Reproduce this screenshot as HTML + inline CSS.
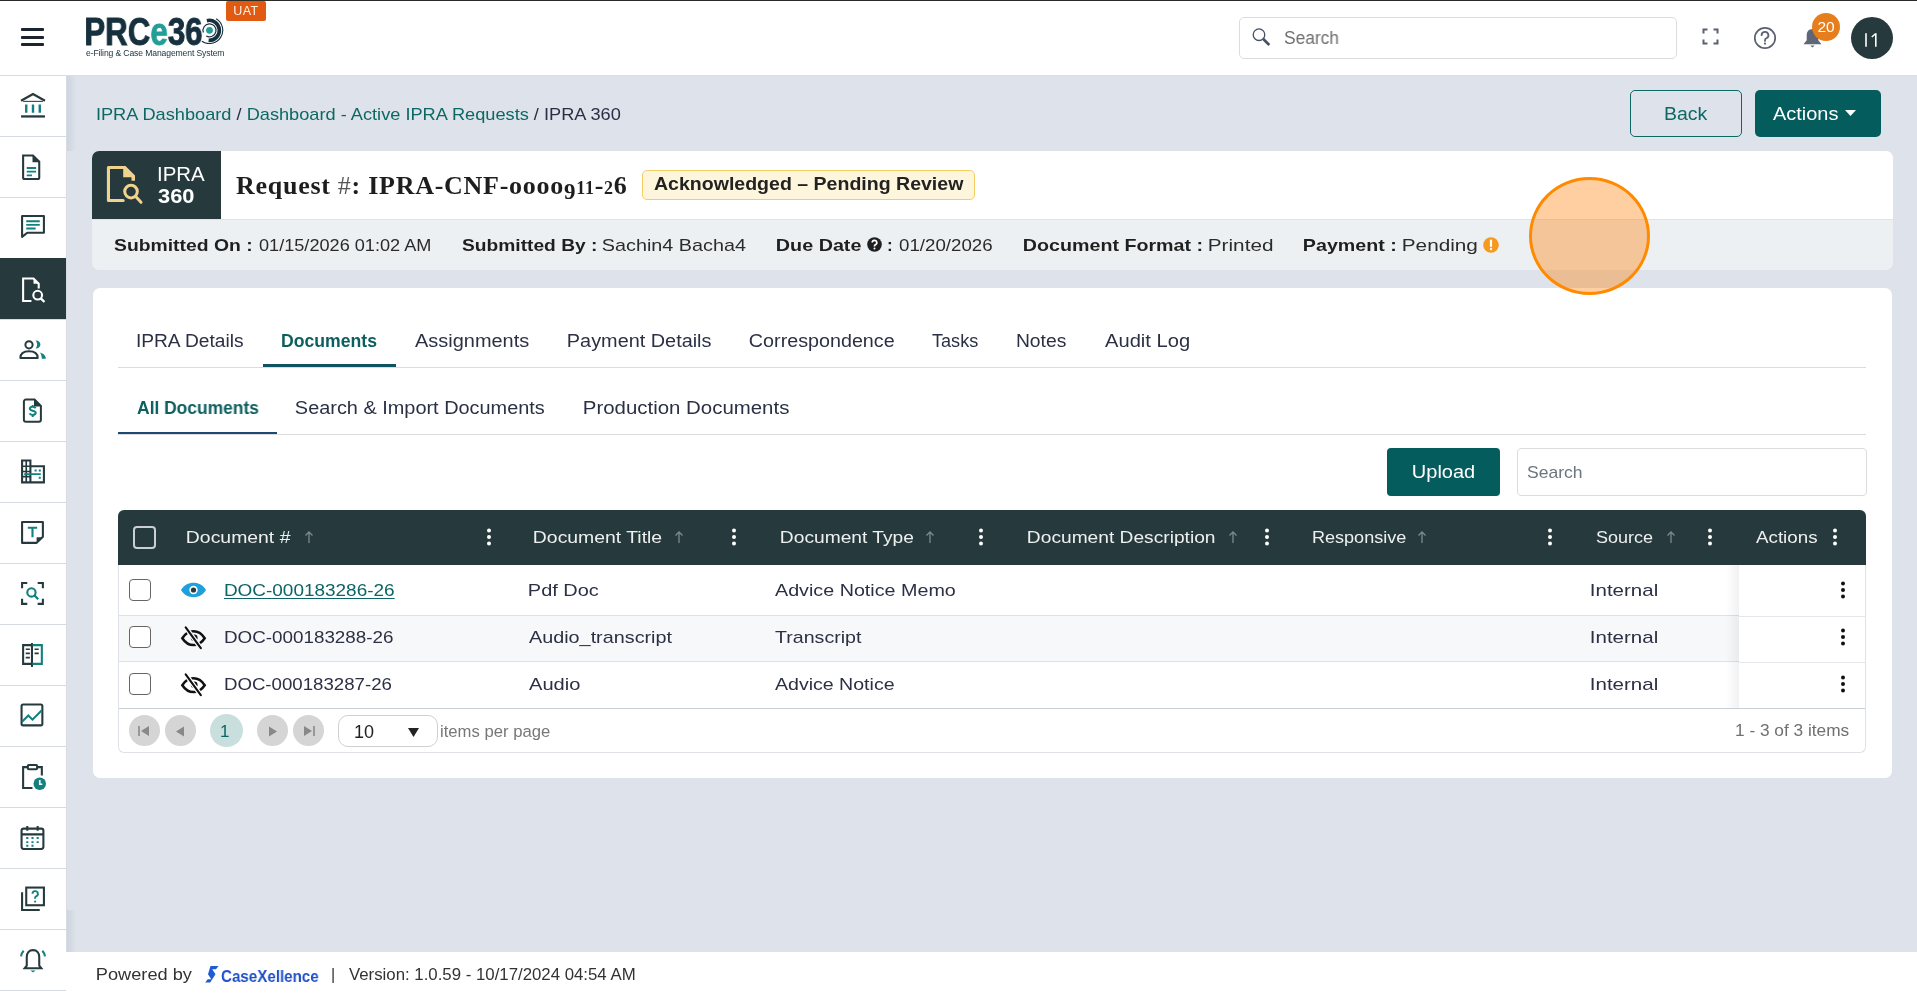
<!DOCTYPE html>
<html><head><meta charset="utf-8">
<style>
*{box-sizing:border-box;margin:0;padding:0}
html,body{width:1917px;height:993px;overflow:hidden;background:#dee2ea;font-family:"Liberation Sans",sans-serif;color:#2b3044}
.a{position:absolute;white-space:nowrap;will-change:transform}
</style></head><body>

<div class="a" style="left:0;top:0;width:1917px;height:75px;background:#fff"></div>
<div class="a" style="left:0;top:0;width:1917px;height:1px;background:#272c26"></div>
<div class="a" style="left:21px;top:28px;width:23px;height:2.6px;background:#1c2430;border-radius:1px"></div>
<div class="a" style="left:21px;top:35.5px;width:23px;height:2.6px;background:#1c2430;border-radius:1px"></div>
<div class="a" style="left:21px;top:43px;width:23px;height:2.6px;background:#1c2430;border-radius:1px"></div>
<div class="a" style="left:84px;top:12.73px;line-height:38px;font-size:38px;font-weight:700;color:#16303d;letter-spacing:0px;-webkit-text-stroke:0.9px currentColor;transform:scaleX(0.8227);transform-origin:2px 0">PRC<span style="color:#239e96">e</span>36</div>
<svg class="a" style="left:195px;top:14.2px" width="30" height="30" viewBox="0 0 30 30">
<path d="M11.9 6.64 A10 10 0 1 1 13.6 26.3" fill="none" stroke="#16303d" stroke-width="3.6"/>
<path d="M8.39 18.52 A6.5 6.5 0 1 1 11.25 21.93" fill="none" stroke="#16303d" stroke-width="1.2"/>
<path d="M21.15 4.78 A13.3 13.3 0 1 1 6.87 27.2" fill="none" stroke="#16303d" stroke-width="1.1"/>
<circle cx="14.5" cy="16.3" r="3.4" fill="#239e96"/>
</svg>
<div class="a" style="left:86px;top:47.5px;font-size:8.6px;line-height:10px;color:#16303d;letter-spacing:-0.12px">e-Filing &amp; Case Management System</div>
<div class="a" style="left:226px;top:1px;width:40px;height:20px;background:#e05a12;border-radius:2px;color:#fdf0e6;font-size:12.5px;text-align:center;line-height:21px;letter-spacing:0.4px">UAT</div>
<div class="a" style="left:1239px;top:17px;width:438px;height:42px;border:1px solid #dcdcdc;border-radius:5px"></div>
<svg class="a" style="left:1250px;top:25px" width="24" height="24" viewBox="0 0 24 24"><circle cx="9" cy="9.7" r="5.8" fill="none" stroke="#454f63" stroke-width="1.3"/><path d="M13.3 14 L19.3 20" stroke="#454f63" stroke-width="2.6"/></svg>
<div class="a" style="left:1283.6px;top:30.19px;line-height:17.5px;font-size:17.5px;font-weight:400;color:#6e6e6e;letter-spacing:0px;;transform:scaleX(0.9889);transform-origin:1px 0">Search</div>
<svg class="a" style="left:1702px;top:28px" width="17" height="17" viewBox="0 0 17 17" fill="none" stroke="#5a6170" stroke-width="2"><path d="M1.5 5.5V1.5H5.5M11.5 1.5H15.5V5.5M15.5 11.5V15.5H11.5M5.5 15.5H1.5V11.5"/></svg>
<svg class="a" style="left:1753px;top:26px" width="24" height="24" viewBox="0 0 24 24"><circle cx="12" cy="12" r="10.2" fill="none" stroke="#5a6170" stroke-width="1.7"/><path d="M8.6 9.2a3.4 3.4 0 1 1 4.8 3.1c-.9.4-1.4 1-1.4 1.9v.7" fill="none" stroke="#5a6170" stroke-width="1.8" stroke-linecap="round"/><circle cx="12" cy="17.6" r="1.1" fill="#5a6170"/></svg>
<svg class="a" style="left:1803px;top:28px" width="19" height="20" viewBox="0 0 19 20"><path d="M9.5 1c-3.6 0-5.8 2.8-5.8 6.3v5L0.5 16.2h18l-3.2-3.9v-5C15.3 3.8 13.1 1 9.5 1z" fill="#5f6675"/><path d="M7.3 17.5h4.4l-2.2 1.9z" fill="#5f6675"/></svg>
<div class="a" style="left:1812px;top:13px;width:28px;height:28px;border-radius:50%;background:#e67e1e;color:#fff;font-size:15.5px;text-align:center;line-height:28px">20</div>
<div class="a" style="left:1851px;top:17px;width:42px;height:42px;border-radius:50%;background:#263a3e"></div>
<svg class="a" style="left:1851px;top:17px" width="42" height="42" viewBox="0 0 42 42"><path d="M15 16.2V29.8M24.8 16.2V29.8M24.8 16.5L20.8 20" fill="none" stroke="#fff" stroke-width="1.6"/></svg>
<div class="a" style="left:0;top:75px;width:66px;height:918px;background:#fff"></div>
<div class="a" style="left:66px;top:75px;width:10px;height:76px;background:linear-gradient(90deg,#cbd3dd,#dee2ea)"></div>
<div class="a" style="left:66px;top:910px;width:10px;height:42px;background:linear-gradient(90deg,#cbd3dd,#dee2ea)"></div>
<div class="a" style="left:66px;top:75px;width:1px;height:918px;background:#d6dbe4"></div>
<div class="a" style="left:0;top:75px;width:66px;height:1px;background:#d6dbe3"></div>
<div class="a" style="left:0;top:136px;width:66px;height:1px;background:#d6dbe3"></div>
<div class="a" style="left:0;top:197px;width:66px;height:1px;background:#d6dbe3"></div>
<div class="a" style="left:0;top:258px;width:66px;height:1px;background:#d6dbe3"></div>
<div class="a" style="left:0;top:319px;width:66px;height:1px;background:#d6dbe3"></div>
<div class="a" style="left:0;top:380px;width:66px;height:1px;background:#d6dbe3"></div>
<div class="a" style="left:0;top:441px;width:66px;height:1px;background:#d6dbe3"></div>
<div class="a" style="left:0;top:502px;width:66px;height:1px;background:#d6dbe3"></div>
<div class="a" style="left:0;top:563px;width:66px;height:1px;background:#d6dbe3"></div>
<div class="a" style="left:0;top:624px;width:66px;height:1px;background:#d6dbe3"></div>
<div class="a" style="left:0;top:685px;width:66px;height:1px;background:#d6dbe3"></div>
<div class="a" style="left:0;top:746px;width:66px;height:1px;background:#d6dbe3"></div>
<div class="a" style="left:0;top:807px;width:66px;height:1px;background:#d6dbe3"></div>
<div class="a" style="left:0;top:868px;width:66px;height:1px;background:#d6dbe3"></div>
<div class="a" style="left:0;top:929px;width:66px;height:1px;background:#d6dbe3"></div>
<div class="a" style="left:0;top:990px;width:66px;height:1px;background:#d6dbe3"></div>
<div class="a" style="left:0;top:258px;width:66px;height:61px;background:#263a3e"></div>
<div class="a" style="left:67px;top:75px;width:1850px;height:1px;background:#dcdde0"></div>
<svg class="a" style="left:20px;top:91.5px" width="26" height="26" viewBox="0 0 25 25"><path d="M1 8.5 L12.5 2 L24 8.5" fill="none" stroke="#263a3e" stroke-width="2.2"/><path d="M3 9h19" stroke="#263a3e" stroke-width="1"/><path d="M6 12v8M12.5 12v8M19 12v8" stroke="#12807e" stroke-width="2.3"/><path d="M1 23.5h23" stroke="#263a3e" stroke-width="2.2"/></svg>
<svg class="a" style="left:20px;top:153.5px" width="26" height="26" viewBox="0 0 25 25"><path d="M3 1.5h9.5l6 6v15a1.5 1.5 0 0 1-1.5 1.5H4.5A1.5 1.5 0 0 1 3 22.5z" fill="none" stroke="#263a3e" stroke-width="2"/><path d="M12 1.5v6.5h6.5" fill="#263a3e"/><path d="M6.5 13.5h9M6.5 17h9M6.5 20.5h5" stroke="#12807e" stroke-width="1.8"/></svg>
<svg class="a" style="left:20px;top:213.5px" width="26" height="26" viewBox="0 0 25 25"><path d="M2 2h21v16H7l-5 4z" fill="none" stroke="#263a3e" stroke-width="2" stroke-linejoin="round"/><path d="M6 7h13M6 10.5h13M6 14h9" stroke="#12807e" stroke-width="1.8"/></svg>
<svg class="a" style="left:20px;top:276.5px" width="26" height="26" viewBox="0 0 25 25"><path d="M11 23H3V1.5h10l5 5V11" fill="none" stroke="#fff" stroke-width="2"/><path d="M13 1.5v5h5z" fill="#fff"/><circle cx="17" cy="17.5" r="4.2" fill="none" stroke="#fff" stroke-width="2"/><path d="M20 20.5l3.5 3.5" stroke="#fff" stroke-width="2.2"/></svg>
<svg class="a" style="left:20px;top:458.5px" width="26" height="26" viewBox="0 0 25 25"><path d="M2 1.5h8v21H2z M10 7h13v15.5H10z" fill="none" stroke="#263a3e" stroke-width="2"/><path d="M2 7h8M2 12h8M2 17h8M6 1.5v21" stroke="#263a3e" stroke-width="1.6"/><path d="M4 14.5h16M14 11h2M18 11h2M18 18h2" stroke="#12807e" stroke-width="1.8"/></svg>
<svg class="a" style="left:20px;top:519.5px" width="26" height="26" viewBox="0 0 25 25"><path d="M2 2h20v14l-6 6H2z" fill="none" stroke="#263a3e" stroke-width="2" stroke-linejoin="round"/><path d="M16 22v-5.5h6z" fill="#263a3e"/><path d="M7.5 7.5h9M12 7.5v9" stroke="#12807e" stroke-width="2"/></svg>
<svg class="a" style="left:20px;top:580.5px" width="26" height="26" viewBox="0 0 25 25"><path d="M2 7V2h5M17 2h5v5M22 17v5h-5M7 22H2v-5" fill="none" stroke="#263a3e" stroke-width="2"/><circle cx="11" cy="11" r="4" fill="none" stroke="#12807e" stroke-width="2"/><path d="M14 14l3.5 3.5" stroke="#12807e" stroke-width="2.2"/></svg>
<svg class="a" style="left:20px;top:641.5px" width="26" height="26" viewBox="0 0 25 25"><path d="M11.5 1v23" stroke="#263a3e" stroke-width="2"/><path d="M11 3H3v18h8" fill="none" stroke="#263a3e" stroke-width="2"/><path d="M12 3h9v18h-9" fill="none" stroke="#12807e" stroke-width="2"/><path d="M5.5 7h4M5.5 11h4M5.5 15h4M14 7h4M14 11h4" stroke="#263a3e" stroke-width="1.6"/></svg>
<svg class="a" style="left:20px;top:702.5px" width="26" height="26" viewBox="0 0 25 25"><rect x="1.5" y="1.5" width="20" height="20" rx="1.5" fill="none" stroke="#263a3e" stroke-width="2"/><path d="M2 18l6-6 4 4 9-9" fill="none" stroke="#12807e" stroke-width="2"/></svg>
<svg class="a" style="left:20px;top:763.5px" width="26" height="26" viewBox="0 0 25 25"><path d="M8 3H3v20h9M16 3h5v8" fill="none" stroke="#263a3e" stroke-width="2"/><rect x="7.5" y="1" width="9" height="4" rx="1" fill="none" stroke="#263a3e" stroke-width="2"/><circle cx="19" cy="19" r="6" fill="#12807e"/><path d="M19 15.5v4h2.5" fill="none" stroke="#fff" stroke-width="1.6"/></svg>
<svg class="a" style="left:20px;top:824.5px" width="26" height="26" viewBox="0 0 25 25"><rect x="1.5" y="3.5" width="21" height="19.5" rx="2" fill="none" stroke="#263a3e" stroke-width="2"/><path d="M1.5 9h21M7 1v4.5M17 1v4.5" stroke="#263a3e" stroke-width="2"/><path d="M6 12.5h2M11 12.5h2M16 12.5h2M6 16.5h2M11 16.5h2M16 16.5h2M6 20h2M11 20h2" stroke="#12807e" stroke-width="1.8"/></svg>
<svg class="a" style="left:20px;top:885.5px" width="26" height="26" viewBox="0 0 25 25"><rect x="6" y="1.5" width="17" height="17" fill="none" stroke="#263a3e" stroke-width="2"/><path d="M2 6v17h17" fill="none" stroke="#263a3e" stroke-width="2"/><path d="M12 7.5a2.6 2.6 0 1 1 3.5 2.5c-.7.3-1 .8-1 1.5v.8" fill="none" stroke="#12807e" stroke-width="1.8"/><circle cx="14.5" cy="15" r="1" fill="#12807e"/></svg>
<svg class="a" style="left:20px;top:946.5px" width="26" height="26" viewBox="0 0 25 25"><path d="M12.5 3c-4 0-6 3-6 6.5V18l-2 2.5h16l-2-2.5V9.5C18.5 6 16.5 3 12.5 3z" fill="none" stroke="#263a3e" stroke-width="2"/><path d="M3.5 3.5C2 5 1.2 7 1 9M21.5 3.5C23 5 23.8 7 24 9" fill="none" stroke="#12807e" stroke-width="2"/><path d="M10 22.5h5l-2.5 2z" fill="#12807e"/></svg>
<svg class="a" style="left:18px;top:337px" width="30" height="26" viewBox="0 0 30 26"><circle cx="11" cy="7.8" r="3.6" fill="none" stroke="#263a3e" stroke-width="2"/><path d="M2.4 21C2.4 16.5 6 14.3 11 14.3S19.7 16.5 19.7 21Z" fill="none" stroke="#263a3e" stroke-width="2" stroke-linejoin="round"/><path d="M17.6 3.4C20.8 3.4 22.4 5.5 22.4 7.5S20.8 11.6 17.6 11.6C18.7 10 19.1 9 19.1 7.5S18.7 5 17.6 3.4Z" fill="#12807e"/><path d="M21.8 15.6C25.5 16.5 27.8 18.8 27.8 21.7H23.8C23.8 19.5 23.2 17.2 21.8 15.6Z" fill="#12807e"/></svg>
<svg class="a" style="left:20px;top:396px" width="26" height="30" viewBox="0 0 26 30"><path d="M14.5 3.5H5.9a2 2 0 0 0-2 2V23.7a2 2 0 0 0 2 2H18.9a2 2 0 0 0 2-2V9.9Z" fill="none" stroke="#263a3e" stroke-width="2" stroke-linejoin="round"/><path d="M14 2.6L21.8 10.4H14Z" fill="#263a3e"/><path d="M15.6 12.2c-.5-1-1.5-1.4-2.9-1.4-1.5 0-2.8.8-2.8 2s1.2 1.6 2.8 1.9 3 .7 3 2.1-1.3 2.1-3 2.1c-1.5 0-2.6-.5-3.1-1.5M12.7 9v2M12.7 19v2" fill="none" stroke="#12807e" stroke-width="2"/></svg>
<div class="a" style="left:96px;top:105.61px;line-height:17px;font-size:17px;font-weight:400;color:#2a2f45;letter-spacing:0px;;transform:scaleX(1.0703);transform-origin:1px 0"><span style="color:#0d6864">IPRA Dashboard</span> / <span style="color:#0d6864">Dashboard - Active IPRA Requests</span> / IPRA 360</div>
<div class="a" style="left:1630px;top:90px;width:112px;height:47px;border:1px solid #0d6864;border-radius:5px"></div>
<div class="a" style="left:1664.3px;top:105.79px;line-height:17.5px;font-size:17.5px;font-weight:400;color:#0d6864;letter-spacing:0px;;transform:scaleX(1.1132);transform-origin:1px 0">Back</div>
<div class="a" style="left:1755px;top:90px;width:126px;height:47px;background:#055c5c;border-radius:5px"></div>
<div class="a" style="left:1772.6px;top:105.79px;line-height:17.5px;font-size:17.5px;font-weight:400;color:#fff;letter-spacing:0px;;transform:scaleX(1.1404);transform-origin:0px 0">Actions</div>
<svg class="a" style="left:1845px;top:110px" width="11" height="6" viewBox="0 0 11 6"><path d="M0 0h11L5.5 6z" fill="#fff"/></svg>
<div class="a" style="left:92px;top:151px;width:1801px;height:119px;background:#edf0f2;border-radius:7px;overflow:hidden"><div class="a" style="left:0;top:0;width:1801px;height:69px;background:#fff;border-bottom:1px solid #dfe3e6"></div><div class="a" style="left:0;top:0;width:129px;height:68px;background:#263a3e"></div></div>
<svg class="a" style="left:95px;top:155px" width="50" height="52" viewBox="0 0 50 52"><path d="M28.2 45.5H13.45V12.5H29" fill="none" stroke="#f1d38e" stroke-width="3.1" stroke-linejoin="round" stroke-linecap="round"/><path d="M28.2 11H30.5L40 20.5V25.7H36.5V22.2H28.2Z" fill="#f1d38e"/><circle cx="36" cy="36.6" r="6.3" fill="none" stroke="#f1d38e" stroke-width="3"/><path d="M41 41.8L46 47.3" stroke="#f1d38e" stroke-width="3" stroke-linecap="round"/></svg>
<div class="a" style="left:157px;top:164.69px;line-height:19.5px;font-size:19.5px;font-weight:400;color:#fff;letter-spacing:0px;font-weight:300;transform:scaleX(1.0489);transform-origin:1px 0">IPRA</div>
<div class="a" style="left:158px;top:186.69px;line-height:19.5px;font-size:19.5px;font-weight:700;color:#fff;letter-spacing:0px;;transform:scaleX(1.1188);transform-origin:0px 0">360</div>
<div class="a" style="left:236px;top:172.72px;line-height:26px;font-size:26px;font-weight:700;color:#1e1e1e;letter-spacing:0.724px;font-family:'Liberation Serif',serif;">Request <span style="font-weight:400;color:#555">#</span>: IPRA-CNF-oooo<span style="font-size:23px;position:relative;top:5px">9</span><span style="font-size:18px">11</span>-<span style="font-size:18px">2</span>6</div>
<div class="a" style="left:642px;top:170px;width:333px;height:30px;background:#fdf6dc;border:1px solid #f3cf63;border-radius:5px"></div>
<div class="a" style="left:653.7px;top:176.39px;line-height:17.5px;font-size:17.5px;font-weight:700;color:#222;letter-spacing:0px;;transform:scaleX(1.1162);transform-origin:0px 0">Acknowledged &#8211; Pending Review</div>
<div class="a" style="left:114.2px;top:236.61px;line-height:17px;font-size:17px;font-weight:700;color:#1f1f1f;letter-spacing:0px;;transform:scaleX(1.1380);transform-origin:0px 0">Submitted On :</div>
<div class="a" style="left:259px;top:236.61px;line-height:17px;font-size:17px;font-weight:400;color:#2b2b2b;letter-spacing:0px;;transform:scaleX(1.0665);transform-origin:0px 0">01/15/2026 01:02 AM</div>
<div class="a" style="left:461.7px;top:236.61px;line-height:17px;font-size:17px;font-weight:700;color:#1f1f1f;letter-spacing:0px;;transform:scaleX(1.1286);transform-origin:0px 0">Submitted By :</div>
<div class="a" style="left:602.4px;top:236.61px;line-height:17px;font-size:17px;font-weight:400;color:#2b2b2b;letter-spacing:0px;;transform:scaleX(1.1634);transform-origin:1px 0">Sachin4 Bacha4</div>
<div class="a" style="left:776.2px;top:236.61px;line-height:17px;font-size:17px;font-weight:700;color:#1f1f1f;letter-spacing:0px;;transform:scaleX(1.1616);transform-origin:1px 0">Due Date</div>
<svg class="a" style="left:867px;top:237px" width="15" height="15" viewBox="0 0 15 15"><circle cx="7.5" cy="7.5" r="7.3" fill="#1f1f1f"/><path d="M5.2 5.6a2.3 2.3 0 1 1 3.2 2.1c-.6.3-.9.7-.9 1.3v.4" fill="none" stroke="#fff" stroke-width="1.7"/><circle cx="7.5" cy="11.6" r="1" fill="#fff"/></svg>
<div class="a" style="left:886.5px;top:236.61px;line-height:17px;font-size:17px;font-weight:700;color:#1f1f1f;letter-spacing:0px;">:</div>
<div class="a" style="left:899px;top:236.61px;line-height:17px;font-size:17px;font-weight:400;color:#2b2b2b;letter-spacing:0px;;transform:scaleX(1.1000);transform-origin:0px 0">01/20/2026</div>
<div class="a" style="left:1022.6px;top:236.61px;line-height:17px;font-size:17px;font-weight:700;color:#1f1f1f;letter-spacing:0px;;transform:scaleX(1.1565);transform-origin:1px 0">Document Format :</div>
<div class="a" style="left:1207.7px;top:236.61px;line-height:17px;font-size:17px;font-weight:400;color:#2b2b2b;letter-spacing:0px;;transform:scaleX(1.2192);transform-origin:1px 0">Printed</div>
<div class="a" style="left:1303.2px;top:236.61px;line-height:17px;font-size:17px;font-weight:700;color:#1f1f1f;letter-spacing:0px;;transform:scaleX(1.1557);transform-origin:1px 0">Payment :</div>
<div class="a" style="left:1401.5px;top:236.61px;line-height:17px;font-size:17px;font-weight:400;color:#2b2b2b;letter-spacing:0px;;transform:scaleX(1.2197);transform-origin:1px 0">Pending</div>
<svg class="a" style="left:1483px;top:237px" width="16" height="16" viewBox="0 0 16 16"><circle cx="8" cy="8" r="7.8" fill="#f59a1f"/><path d="M8 3.5v5.5" stroke="#fff" stroke-width="2.2" stroke-linecap="round"/><circle cx="8" cy="12" r="1.2" fill="#fff"/></svg>
<div class="a" style="left:93px;top:288px;width:1799px;height:490px;background:#fff;border-radius:7px"></div>
<div class="a" style="left:136.3px;top:333.19px;line-height:17.5px;font-size:17.5px;font-weight:400;color:#2b3044;letter-spacing:0px;;transform:scaleX(1.0959);transform-origin:1px 0">IPRA Details</div>
<div class="a" style="left:281px;top:333.19px;line-height:17.5px;font-size:17.5px;font-weight:700;color:#0d5e5e;letter-spacing:0px;;transform:scaleX(1.0074);transform-origin:1px 0">Documents</div>
<div class="a" style="left:415.1px;top:333.19px;line-height:17.5px;font-size:17.5px;font-weight:400;color:#2b3044;letter-spacing:0px;;transform:scaleX(1.1400);transform-origin:0px 0">Assignments</div>
<div class="a" style="left:567.2px;top:333.19px;line-height:17.5px;font-size:17.5px;font-weight:400;color:#2b3044;letter-spacing:0px;;transform:scaleX(1.1349);transform-origin:1px 0">Payment Details</div>
<div class="a" style="left:748.5px;top:333.19px;line-height:17.5px;font-size:17.5px;font-weight:400;color:#2b3044;letter-spacing:0px;;transform:scaleX(1.1266);transform-origin:1px 0">Correspondence</div>
<div class="a" style="left:932px;top:333.19px;line-height:17.5px;font-size:17.5px;font-weight:400;color:#2b3044;letter-spacing:0px;;transform:scaleX(1.0333);transform-origin:0px 0">Tasks</div>
<div class="a" style="left:1016.4px;top:333.19px;line-height:17.5px;font-size:17.5px;font-weight:400;color:#2b3044;letter-spacing:0px;;transform:scaleX(1.1022);transform-origin:1px 0">Notes</div>
<div class="a" style="left:1105.4px;top:333.19px;line-height:17.5px;font-size:17.5px;font-weight:400;color:#2b3044;letter-spacing:0px;;transform:scaleX(1.1507);transform-origin:0px 0">Audit Log</div>
<div class="a" style="left:118px;top:367px;width:1748px;height:1px;background:#dcdcdc"></div>
<div class="a" style="left:263px;top:364px;width:133px;height:3px;background:#0f5262"></div>
<div class="a" style="left:136.5px;top:400.19px;line-height:17.5px;font-size:17.5px;font-weight:700;color:#0d5e5e;letter-spacing:0px;;transform:scaleX(0.9951);transform-origin:0px 0">All Documents</div>
<div class="a" style="left:295.3px;top:400.19px;line-height:17.5px;font-size:17.5px;font-weight:400;color:#2b3044;letter-spacing:0px;;transform:scaleX(1.1370);transform-origin:1px 0">Search &amp; Import Documents</div>
<div class="a" style="left:582.8px;top:400.19px;line-height:17.5px;font-size:17.5px;font-weight:400;color:#2b3044;letter-spacing:0px;;transform:scaleX(1.1665);transform-origin:1px 0">Production Documents</div>
<div class="a" style="left:118px;top:434px;width:1748px;height:1px;background:#dcdcdc"></div>
<div class="a" style="left:118px;top:432px;width:159px;height:2px;background:#1b4a72"></div>
<div class="a" style="left:1387px;top:448px;width:113px;height:48px;background:#055c5c;border-radius:4px"></div>
<div class="a" style="left:1411.6px;top:463.79px;line-height:17.5px;font-size:17.5px;font-weight:400;color:#fff;letter-spacing:0px;;transform:scaleX(1.1426);transform-origin:1px 0">Upload</div>
<div class="a" style="left:1517px;top:448px;width:350px;height:48px;border:1px solid #dcdcdc;border-radius:4px"></div>
<div class="a" style="left:1527.3px;top:463.91px;line-height:17px;font-size:17px;font-weight:400;color:#6c757d;letter-spacing:0px;;transform:scaleX(1.0327);transform-origin:1px 0">Search</div>
<div class="a" style="left:118px;top:510px;width:1748px;height:55px;background:#263a3e;border-radius:6px 6px 0 0"></div>
<div class="a" style="left:133px;top:526px;width:23px;height:23px;border:2px solid #c9cfd2;border-radius:4px"></div>
<div class="a" style="left:185.9px;top:528.81px;line-height:17px;font-size:17px;font-weight:400;color:#eef0f0;letter-spacing:0px;;transform:scaleX(1.1407);transform-origin:1px 0">Document #</div>
<svg class="a" style="left:303.5px;top:530px" width="10" height="14" viewBox="0 0 10 14"><path d="M5 13V2M1.5 5.5L5 2l3.5 3.5" fill="none" stroke="#7d8a8d" stroke-width="1.3"/></svg>
<svg class="a" style="left:485.6px;top:528px" width="6" height="18" viewBox="0 0 6 18"><circle cx="3" cy="2.5" r="2" fill="#fff"/><circle cx="3" cy="9" r="2" fill="#fff"/><circle cx="3" cy="15.5" r="2" fill="#fff"/></svg>
<div class="a" style="left:533.1px;top:528.81px;line-height:17px;font-size:17px;font-weight:400;color:#eef0f0;letter-spacing:0px;;transform:scaleX(1.1402);transform-origin:1px 0">Document Title</div>
<svg class="a" style="left:674.4px;top:530px" width="10" height="14" viewBox="0 0 10 14"><path d="M5 13V2M1.5 5.5L5 2l3.5 3.5" fill="none" stroke="#7d8a8d" stroke-width="1.3"/></svg>
<svg class="a" style="left:731.2px;top:528px" width="6" height="18" viewBox="0 0 6 18"><circle cx="3" cy="2.5" r="2" fill="#fff"/><circle cx="3" cy="9" r="2" fill="#fff"/><circle cx="3" cy="15.5" r="2" fill="#fff"/></svg>
<div class="a" style="left:779.9px;top:528.81px;line-height:17px;font-size:17px;font-weight:400;color:#eef0f0;letter-spacing:0px;;transform:scaleX(1.1291);transform-origin:1px 0">Document Type</div>
<svg class="a" style="left:925.3px;top:530px" width="10" height="14" viewBox="0 0 10 14"><path d="M5 13V2M1.5 5.5L5 2l3.5 3.5" fill="none" stroke="#7d8a8d" stroke-width="1.3"/></svg>
<svg class="a" style="left:978.4px;top:528px" width="6" height="18" viewBox="0 0 6 18"><circle cx="3" cy="2.5" r="2" fill="#fff"/><circle cx="3" cy="9" r="2" fill="#fff"/><circle cx="3" cy="15.5" r="2" fill="#fff"/></svg>
<div class="a" style="left:1027.2px;top:528.81px;line-height:17px;font-size:17px;font-weight:400;color:#eef0f0;letter-spacing:0px;;transform:scaleX(1.1277);transform-origin:1px 0">Document Description</div>
<svg class="a" style="left:1227.6px;top:530px" width="10" height="14" viewBox="0 0 10 14"><path d="M5 13V2M1.5 5.5L5 2l3.5 3.5" fill="none" stroke="#7d8a8d" stroke-width="1.3"/></svg>
<svg class="a" style="left:1263.5px;top:528px" width="6" height="18" viewBox="0 0 6 18"><circle cx="3" cy="2.5" r="2" fill="#fff"/><circle cx="3" cy="9" r="2" fill="#fff"/><circle cx="3" cy="15.5" r="2" fill="#fff"/></svg>
<div class="a" style="left:1311.6px;top:528.81px;line-height:17px;font-size:17px;font-weight:400;color:#eef0f0;letter-spacing:0px;;transform:scaleX(1.0621);transform-origin:1px 0">Responsive</div>
<svg class="a" style="left:1417.4px;top:530px" width="10" height="14" viewBox="0 0 10 14"><path d="M5 13V2M1.5 5.5L5 2l3.5 3.5" fill="none" stroke="#7d8a8d" stroke-width="1.3"/></svg>
<svg class="a" style="left:1547.4px;top:528px" width="6" height="18" viewBox="0 0 6 18"><circle cx="3" cy="2.5" r="2" fill="#fff"/><circle cx="3" cy="9" r="2" fill="#fff"/><circle cx="3" cy="15.5" r="2" fill="#fff"/></svg>
<div class="a" style="left:1595.7px;top:528.81px;line-height:17px;font-size:17px;font-weight:400;color:#eef0f0;letter-spacing:0px;;transform:scaleX(1.0585);transform-origin:1px 0">Source</div>
<svg class="a" style="left:1665.6px;top:530px" width="10" height="14" viewBox="0 0 10 14"><path d="M5 13V2M1.5 5.5L5 2l3.5 3.5" fill="none" stroke="#7d8a8d" stroke-width="1.3"/></svg>
<svg class="a" style="left:1707px;top:528px" width="6" height="18" viewBox="0 0 6 18"><circle cx="3" cy="2.5" r="2" fill="#fff"/><circle cx="3" cy="9" r="2" fill="#fff"/><circle cx="3" cy="15.5" r="2" fill="#fff"/></svg>
<div class="a" style="left:1755.7px;top:528.81px;line-height:17px;font-size:17px;font-weight:400;color:#eef0f0;letter-spacing:0px;;transform:scaleX(1.1036);transform-origin:0px 0">Actions</div>
<svg class="a" style="left:1832px;top:528px" width="6" height="18" viewBox="0 0 6 18"><circle cx="3" cy="2.5" r="2" fill="#fff"/><circle cx="3" cy="9" r="2" fill="#fff"/><circle cx="3" cy="15.5" r="2" fill="#fff"/></svg>
<div class="a" style="left:118px;top:565px;width:1748px;height:51px;background:#fff;border-bottom:1px solid #dee2e6;border-left:1px solid #dee2e6;border-right:1px solid #dee2e6"></div>
<div class="a" style="left:118px;top:616px;width:1748px;height:46px;background:#f7f8fa;border-bottom:1px solid #dee2e6;border-left:1px solid #dee2e6;border-right:1px solid #dee2e6"></div>
<div class="a" style="left:118px;top:662px;width:1748px;height:46px;background:#fff;border-left:1px solid #dee2e6;border-right:1px solid #dee2e6"></div>
<div class="a" style="left:1725px;top:565px;width:14px;height:143px;background:linear-gradient(90deg,rgba(0,0,0,0),rgba(0,0,0,.05))"></div>
<div class="a" style="left:1739px;top:565px;width:127px;height:52px;background:#fff;border-bottom:1px solid #e3e6ea;border-right:1px solid #dee2e6"></div>
<div class="a" style="left:1739px;top:617px;width:127px;height:46px;background:#fff;border-bottom:1px solid #e3e6ea;border-right:1px solid #dee2e6"></div>
<div class="a" style="left:1739px;top:663px;width:127px;height:45px;background:#fff;border-right:1px solid #dee2e6"></div>
<div class="a" style="left:118px;top:708px;width:1748px;height:1px;background:#c8d0d6"></div>
<div class="a" style="left:129px;top:578.5px;width:22px;height:22px;border:1.6px solid #666;border-radius:4px;background:#fff"></div>
<svg class="a" style="left:180px;top:581.5px" width="27" height="16" viewBox="0 0 27 16"><path d="M1 8C4 3 8.5 0.8 13.5 0.8S23 3 26 8c-3 5-7.5 7.2-12.5 7.2S4 13 1 8z" fill="#1ea0dc"/><circle cx="13.5" cy="8" r="4.2" fill="#fff"/><circle cx="13.5" cy="8" r="2.6" fill="#263a3e"/></svg>
<div class="a" style="left:223.5px;top:581.61px;line-height:17px;font-size:17px;font-weight:400;color:#0d6466;letter-spacing:0px;text-decoration:underline;text-underline-offset:2px;text-decoration-thickness:1.2px;transform:scaleX(1.1151);transform-origin:1px 0">DOC-000183286-26</div>
<div class="a" style="left:527.6px;top:581.61px;line-height:17px;font-size:17px;font-weight:400;color:#2b3044;letter-spacing:0px;;transform:scaleX(1.1729);transform-origin:1px 0">Pdf Doc</div>
<div class="a" style="left:775.3px;top:581.61px;line-height:17px;font-size:17px;font-weight:400;color:#2b3044;letter-spacing:0px;;transform:scaleX(1.1596);transform-origin:0px 0">Advice Notice Memo</div>
<div class="a" style="left:1590.4px;top:581.61px;line-height:17px;font-size:17px;font-weight:400;color:#2b3044;letter-spacing:0px;;transform:scaleX(1.2073);transform-origin:1px 0">Internal</div>
<svg class="a" style="left:1839.5px;top:580.5px" width="6" height="18" viewBox="0 0 6 18"><circle cx="3" cy="2.5" r="2" fill="#111"/><circle cx="3" cy="9" r="2" fill="#111"/><circle cx="3" cy="15.5" r="2" fill="#111"/></svg>
<div class="a" style="left:129px;top:626.3px;width:22px;height:22px;border:1.6px solid #666;border-radius:4px;background:#fff"></div>
<svg class="a" style="left:180px;top:626.3px" width="27" height="24" viewBox="0 0 27 24"><path d="M2.3 12.2C6 6.6 9.5 5.3 13.5 5.3S21 6.6 24.7 12.2C21 17.8 17.5 19.1 13.5 19.1S6 17.8 2.3 12.2z" fill="none" stroke="#111" stroke-width="2.5"/><circle cx="14.2" cy="11.8" r="3.4" fill="#111"/><path d="M5.7 1.3L20.8 22.2" stroke="#f7f8fa" stroke-width="4.6"/><path d="M5.7 1.3L20.8 22.2" stroke="#111" stroke-width="2.1" stroke-linecap="round"/></svg>
<div class="a" style="left:223.5px;top:629.41px;line-height:17px;font-size:17px;font-weight:400;color:#2b3044;letter-spacing:0px;;transform:scaleX(1.1079);transform-origin:1px 0">DOC-000183288-26</div>
<div class="a" style="left:528.6px;top:629.41px;line-height:17px;font-size:17px;font-weight:400;color:#2b3044;letter-spacing:0px;;transform:scaleX(1.1642);transform-origin:0px 0">Audio_transcript</div>
<div class="a" style="left:775.3px;top:629.41px;line-height:17px;font-size:17px;font-weight:400;color:#2b3044;letter-spacing:0px;;transform:scaleX(1.1533);transform-origin:0px 0">Transcript</div>
<div class="a" style="left:1590.4px;top:629.41px;line-height:17px;font-size:17px;font-weight:400;color:#2b3044;letter-spacing:0px;;transform:scaleX(1.2073);transform-origin:1px 0">Internal</div>
<svg class="a" style="left:1839.5px;top:628.3px" width="6" height="18" viewBox="0 0 6 18"><circle cx="3" cy="2.5" r="2" fill="#111"/><circle cx="3" cy="9" r="2" fill="#111"/><circle cx="3" cy="15.5" r="2" fill="#111"/></svg>
<div class="a" style="left:129px;top:673.0px;width:22px;height:22px;border:1.6px solid #666;border-radius:4px;background:#fff"></div>
<svg class="a" style="left:180px;top:673.0px" width="27" height="24" viewBox="0 0 27 24"><path d="M2.3 12.2C6 6.6 9.5 5.3 13.5 5.3S21 6.6 24.7 12.2C21 17.8 17.5 19.1 13.5 19.1S6 17.8 2.3 12.2z" fill="none" stroke="#111" stroke-width="2.5"/><circle cx="14.2" cy="11.8" r="3.4" fill="#111"/><path d="M5.7 1.3L20.8 22.2" stroke="#fff" stroke-width="4.6"/><path d="M5.7 1.3L20.8 22.2" stroke="#111" stroke-width="2.1" stroke-linecap="round"/></svg>
<div class="a" style="left:223.5px;top:676.11px;line-height:17px;font-size:17px;font-weight:400;color:#2b3044;letter-spacing:0px;;transform:scaleX(1.0974);transform-origin:1px 0">DOC-000183287-26</div>
<div class="a" style="left:528.6px;top:676.11px;line-height:17px;font-size:17px;font-weight:400;color:#2b3044;letter-spacing:0px;;transform:scaleX(1.1814);transform-origin:0px 0">Audio</div>
<div class="a" style="left:775.3px;top:676.11px;line-height:17px;font-size:17px;font-weight:400;color:#2b3044;letter-spacing:0px;;transform:scaleX(1.1500);transform-origin:0px 0">Advice Notice</div>
<div class="a" style="left:1590.4px;top:676.11px;line-height:17px;font-size:17px;font-weight:400;color:#2b3044;letter-spacing:0px;;transform:scaleX(1.2073);transform-origin:1px 0">Internal</div>
<svg class="a" style="left:1839.5px;top:675.0px" width="6" height="18" viewBox="0 0 6 18"><circle cx="3" cy="2.5" r="2" fill="#111"/><circle cx="3" cy="9" r="2" fill="#111"/><circle cx="3" cy="15.5" r="2" fill="#111"/></svg>
<div class="a" style="left:118px;top:708px;width:1748px;height:45px;border:1px solid #dee2e6;border-top:none;border-radius:0 0 6px 6px"></div>
<div class="a" style="left:128.5px;top:715px;width:31px;height:31px;border-radius:50%;background:#d5d5d5"></div>
<div class="a" style="left:164.5px;top:715px;width:31px;height:31px;border-radius:50%;background:#d5d5d5"></div>
<div class="a" style="left:256.5px;top:715px;width:31px;height:31px;border-radius:50%;background:#d5d5d5"></div>
<div class="a" style="left:293.0px;top:715px;width:31px;height:31px;border-radius:50%;background:#d5d5d5"></div>
<svg class="a" style="left:137px;top:725px" width="14" height="12" viewBox="0 0 14 12"><path d="M2 1v10" stroke="#888" stroke-width="1.6"/><path d="M12 1v10L4 6z" fill="#888"/></svg>
<svg class="a" style="left:175px;top:726px" width="10" height="11" viewBox="0 0 10 11"><path d="M9 0.5v10L1 5.5z" fill="#888"/></svg>
<svg class="a" style="left:268px;top:726px" width="10" height="11" viewBox="0 0 10 11"><path d="M1 0.5v10L9 5.5z" fill="#888"/></svg>
<svg class="a" style="left:302px;top:725px" width="14" height="12" viewBox="0 0 14 12"><path d="M12 1v10" stroke="#888" stroke-width="1.6"/><path d="M2 1v10L10 6z" fill="#888"/></svg>
<div class="a" style="left:210px;top:714px;width:33px;height:33px;border-radius:50%;background:#c9dfdd"></div>
<div class="a" style="left:220px;top:722.61px;line-height:17px;font-size:17px;font-weight:400;color:#0d6466;letter-spacing:0px;font-weight:300">1</div>
<div class="a" style="left:338px;top:715px;width:100px;height:32px;border:1px solid #cfcfcf;border-radius:10px"></div>
<div class="a" style="left:354px;top:723.06px;line-height:18px;font-size:18px;font-weight:400;color:#222;letter-spacing:0px;">10</div>
<svg class="a" style="left:408px;top:728px" width="11" height="9" viewBox="0 0 11 9"><path d="M0 0h11L5.5 9z" fill="#222"/></svg>
<div class="a" style="left:440px;top:723.30px;line-height:16.3px;font-size:16.3px;font-weight:400;color:#777;letter-spacing:0px;;transform:scaleX(1.0236);transform-origin:1px 0">items per page</div>
<div class="a" style="left:1735.4px;top:721.81px;line-height:17px;font-size:17px;font-weight:400;color:#707070;letter-spacing:0px;;transform:scaleX(1.0162);transform-origin:1px 0">1 - 3 of 3 items</div>
<div class="a" style="left:1529px;top:177px;width:121px;height:118px;border-radius:50%;background:rgba(255,125,0,.37);border:3px solid #ff8a00"></div>
<div class="a" style="left:66px;top:952px;width:1851px;height:41px;background:#fff"></div>
<div class="a" style="left:96.3px;top:967.16px;line-height:16px;font-size:16px;font-weight:400;color:#333;letter-spacing:0px;;transform:scaleX(1.1369);transform-origin:1px 0">Powered by</div>
<div class="a" style="left:220.6px;top:967.93px;line-height:16.5px;font-size:16.5px;font-weight:700;color:#1f4fc9;letter-spacing:0px;;transform:scaleX(0.9179);transform-origin:0px 0">CaseXellence</div>
<svg class="a" style="left:205px;top:966px" width="14" height="17" viewBox="0 0 14 17"><path d="M5.5 0H13.5L11 3.2H7.2L10.5 8.2 5.2 16.5H0.2L2.7 13.3H6.3L3 8.3z" fill="#1f5bd6"/></svg>
<div class="a" style="left:331px;top:967.16px;line-height:16px;font-size:16px;font-weight:400;color:#333;letter-spacing:0px;">|</div>
<div class="a" style="left:348.5px;top:967.16px;line-height:16px;font-size:16px;font-weight:400;color:#333;letter-spacing:0px;;transform:scaleX(1.0496);transform-origin:0px 0">Version: 1.0.59 - 10/17/2024 04:54 AM</div>
</body></html>
